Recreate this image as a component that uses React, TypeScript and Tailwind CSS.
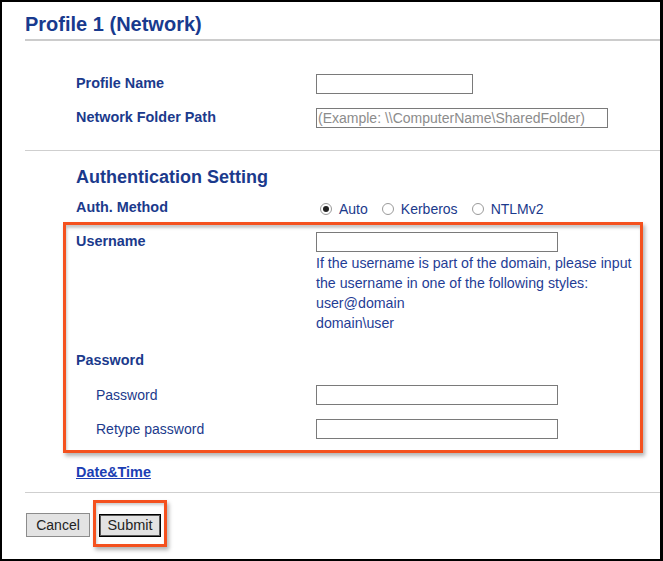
import React from "react";

const navy = "text-[#1b3a8c]";

const Field = ({ w, placeholder }: { w: string; placeholder?: string }) => (
  <input
    type="text"
    placeholder={placeholder}
    className={`${w} h-[20px] border border-[#7a7a7a] bg-white px-[1px] text-[14px] text-black outline-none placeholder:text-[#8c8c8c]`}
  />
);

const Radio = ({ label, checked }: { label: string; checked?: boolean }) => (
  <label className="flex items-center gap-[7px]">
    <span className="flex h-[12px] w-[12px] items-center justify-center rounded-full border border-[#9a9a9a] bg-white">
      {checked && <span className="h-[6px] w-[6px] rounded-full bg-[#222]" />}
    </span>
    <span className={`text-[14px] ${navy}`}>{label}</span>
  </label>
);

const App = () => {
  return (
    <div
      className="box-border h-[561px] w-[663px] overflow-hidden border-2 border-r-[3px] border-black bg-white"
      style={{ fontFamily: '"Liberation Sans", Arial, sans-serif' }}
    >
      <div className="pl-[23px]">
        <h1 className="mt-[10px] text-[20px] leading-[24px] font-bold text-[#183a8e]">
          Profile 1 (Network)
        </h1>
        <div className="mt-[3px] h-[2px] bg-[#cccccc]" />

        <div className="mt-[33px] flex h-[20px] items-center">
          <div className={`w-[291px] pl-[51px] text-[14.4px] font-bold ${navy}`}>Profile Name</div>
          <Field w="w-[157px]" />
        </div>
        <div className="mt-[14px] flex h-[20px] items-center">
          <div className={`w-[291px] pl-[51px] text-[14.4px] font-bold ${navy}`}>Network Folder Path</div>
          <Field w="w-[292px]" placeholder="(Example: \\ComputerName\SharedFolder)" />
        </div>

        <div className="mt-[22px] h-px bg-[#cfcfcf]" />

        <h2 className={`mt-[15px] pl-[51px] text-[18px] leading-[22px] font-bold ${navy}`}>
          Authentication Setting
        </h2>
        <div className="mt-[10px] flex h-[20px] items-center">
          <div className={`w-[291px] pl-[51px] text-[14.4px] font-bold ${navy}`}>Auth. Method</div>
          <div className="mt-[2px] flex items-center gap-[14px] pl-[4px]">
            <Radio label="Auto" checked />
            <Radio label="Kerberos" />
            <Radio label="NTLMv2" />
          </div>
        </div>

        <div className="ml-[38px] mt-[4px] w-[580px] border-[3px] border-[#f4511e] pb-[11px] pl-[10px] pt-[7px] shadow-[inset_1px_3px_3px_rgba(0,0,0,0.22),2px_3px_4px_rgba(0,0,0,0.3)]">
          <div className="flex h-[20px] items-center">
            <div className={`w-[240px] text-[14.4px] font-bold ${navy}`}>Username</div>
            <Field w="w-[242px]" />
          </div>
          <div className="mt-[1px] pl-[240px] text-[14.2px] leading-[20px] text-[#1f3d95]">
            <div className="whitespace-nowrap">If the username is part of the domain, please input</div>
            <div>the username in one of the following styles:</div>
            <div>user@domain</div>
            <div>domain\user</div>
          </div>
          <div className={`mt-[17px] h-[20px] text-[14.4px] leading-[20px] font-bold ${navy}`}>Password</div>
          <div className="mt-[15px] flex h-[20px] items-center">
            <div className={`w-[240px] pl-[20px] text-[14px] ${navy}`}>Password</div>
            <Field w="w-[242px]" />
          </div>
          <div className="mt-[14px] flex h-[20px] items-center">
            <div className={`w-[240px] pl-[20px] text-[14px] ${navy}`}>Retype password</div>
            <Field w="w-[242px]" />
          </div>
        </div>

        <div className="mt-[9px] h-[20px] pl-[51px] leading-[20px]">
          <a href="#" className="text-[14.4px] font-bold text-[#1b3eb4] underline">
            Date&amp;Time
          </a>
        </div>

        <div className="mt-[10px] h-px bg-[#cfcfcf]" />

        <div className="mt-[7px] flex items-start">
          <button className="ml-px mt-[13px] h-[24px] w-[64px] border border-[#8c8c8c] bg-[#e3e3e3] text-[14px] text-[#222]">
            Cancel
          </button>
          <div className="ml-[3px] border-[3px] border-[#f4511e] px-[3px] pb-[7px] pt-[10px] shadow-[inset_1px_2px_3px_rgba(0,0,0,0.2),2px_3px_4px_rgba(0,0,0,0.3)]">
            <button className="h-[23px] w-[62px] border border-black bg-[#e3e3e3] text-[14.5px] text-[#222] shadow-[inset_0_0_0_1px_#5a5a5a]">
              Submit
            </button>
          </div>
        </div>
      </div>
    </div>
  );
};

export default App;
